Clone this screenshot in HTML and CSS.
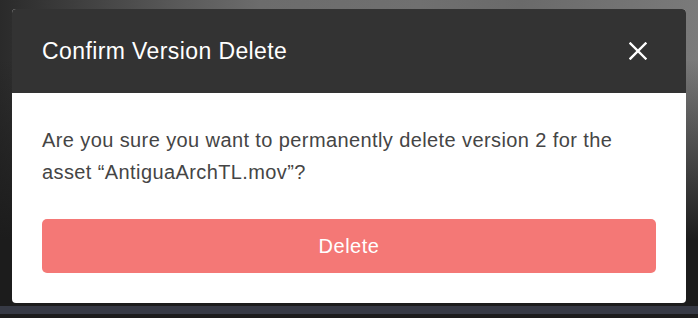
FILE: index.html
```html
<!DOCTYPE html>
<html lang="en">
<head>
    <meta charset="UTF-8">
    <meta name="viewport" content="width=device-width, initial-scale=1.0">
    <title>Confirm Version Delete</title>
    <link rel="stylesheet" href="styles.css">
</head>
<body>
    <div class="backdrop">
        <div class="modal">
            <div class="modal-header">
                <h2>Confirm Version Delete</h2>
                <button class="close-button" aria-label="Close">
                    <svg width="18" height="18" viewBox="0 0 18 18">
                        <path d="M1.5 1.5 L16.5 16.5 M16.5 1.5 L1.5 16.5" stroke="#fff" stroke-width="2.4" stroke-linecap="square"/>
                    </svg>
                </button>
            </div>
            <div class="modal-body">
                <p>Are you sure you want to permanently delete version 2 for the asset “AntiguaArchTL.mov”?</p>
                <button class="delete-button">Delete</button>
            </div>
        </div>
        <div class="timeline-bar"></div>
    </div>
</body>
</html>
```

FILE: styles.css
```css
body {
    margin: 0;
    padding: 0;
    font-family: 'Liberation Sans', Arial, sans-serif;
    background-color: #1c1c1c;
}

.backdrop {
    height: 318px;
    overflow: hidden;
    padding: 9px 0 0 12px;
    box-sizing: border-box;
    background:
        linear-gradient(to bottom, rgba(28, 28, 28, 0) 0, rgba(28, 28, 28, 0) 60px, #1c1c1c 240px),
        linear-gradient(to right, #2a2a2a 0, #3a3a3a 60px, #5a5a5a 180px, #6c6c6c 260px, #707070 420px, #6a6a6a 520px, #7a7a7a 698px);
}

.modal {
    width: 674px;
    background: white;
    border-radius: 4px;
    overflow: hidden;
}

.modal-header {
    height: 84px;
    background-color: #333333;
    display: flex;
    align-items: center;
    justify-content: space-between;
    padding: 0 30px;
}

.modal-header h2 {
    margin: 0;
    color: white;
    font-size: 23px;
    font-weight: normal;
    letter-spacing: 0.4px;
}

.close-button {
    width: 36px;
    height: 36px;
    padding: 0;
    border: none;
    background: none;
    display: flex;
    align-items: center;
    justify-content: center;
    cursor: pointer;
}

.modal-body {
    padding: 31px 30px 30px;
}

.modal-body p {
    margin: 0 0 31px;
    color: #454545;
    font-size: 20px;
    line-height: 32px;
    letter-spacing: 0.4px;
}

.delete-button {
    display: block;
    width: 100%;
    height: 54px;
    border: none;
    border-radius: 5px;
    background-color: #f47876;
    color: white;
    font-family: inherit;
    font-size: 20px;
    letter-spacing: 0.5px;
    cursor: pointer;
}

.timeline-bar {
    height: 8px;
    margin: 3px 0 0 -12px;
    background-color: #373a45;
}
```
